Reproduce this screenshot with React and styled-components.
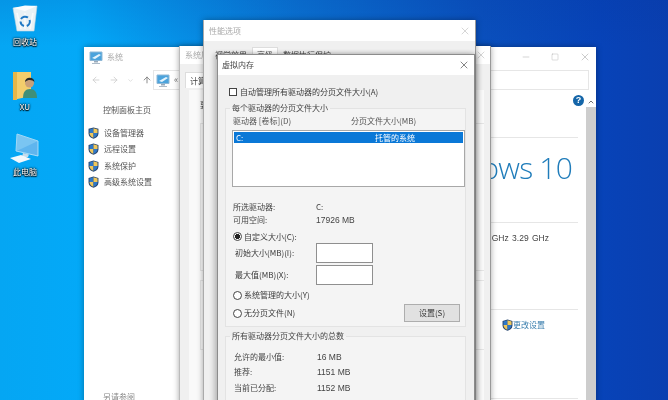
import React from 'react';
import styled, { createGlobalStyle } from 'styled-components';
import { ArrowLeft, ArrowRight, ArrowUp, ChevronDown, ChevronUp, Minus, Square, X } from 'lucide-react';

const GlobalStyle = createGlobalStyle`
  html, body {
    margin: 0;
    padding: 0;
    background: #0a6fd0;
  }
  * {
    box-sizing: border-box;
  }
`;

const Desktop = styled.div`
  position: relative;
  width: 668px;
  height: 400px;
  overflow: hidden;
  filter: blur(0.45px);
  font-family: "Noto Sans CJK SC", "Liberation Sans", sans-serif;
  font-size: 8px;
  line-height: 10px;
  color: #3a3a3a;
  background:
    linear-gradient(180deg, rgba(4, 50, 150, 0.14) 0, rgba(4, 50, 150, 0) 46px),
    linear-gradient(90deg, #05a6f3 0, #03a9f8 84px, #0a72d2 300px, #0a50bd 480px, #0743b8 600px, #0a3fb0 668px);
`;

const IconColumn = styled.div`
  position: absolute;
  left: 0;
  top: 5px;
  width: 50px;
  display: flex;
  flex-direction: column;
`;

const DesktopItem = styled.div`
  height: 65px;
  display: flex;
  flex-direction: column;
  align-items: center;
  color: #fff;
  text-shadow: 0 0 2px #000, 0 0 2px #000, 0 1px 1px #000;
  svg {
    display: block;
    flex: none;
  }
`;

const DesktopLabel = styled.span`
  font-size: 8px;
  line-height: 10px;
`;

const WindowBase = styled.div`
  position: absolute;
  display: flex;
  flex-direction: column;
  overflow: hidden;
  background: #fff;
  box-shadow: 0 0 6px rgba(0, 0, 0, 0.35);
`;

const SystemWindow = styled(WindowBase)`
  left: 84px;
  top: 47px;
  width: 512px;
  height: 358px;
`;

const SystemDialog = styled(WindowBase)`
  left: 179px;
  top: 46px;
  width: 312px;
  height: 360px;
  background: #f0f0f0;
  border-left: 1px solid #bbb;
  border-right: 1px solid #999;
`;

const PerformanceDialog = styled(WindowBase)`
  left: 203px;
  top: 20px;
  width: 273px;
  height: 386px;
  background: #f0f0f0;
  border-left: 1px solid #aaa;
  border-right: 1px solid #999;
`;

const MemoryDialog = styled(WindowBase)`
  left: 217px;
  top: 54px;
  width: 258px;
  height: 352px;
  background: #f0f0f0;
  border: 1px solid #8c8c8c;
  box-shadow: -3px 0 5px rgba(0, 0, 0, 0.22), 3px 0 5px rgba(0, 0, 0, 0.18);
`;

const TitleBar = styled.div`
  flex: none;
  height: ${(p) => p.$h}px;
  display: flex;
  align-items: center;
  padding: 0 ${(p) => p.$right || 5}px 0 ${(p) => p.$left || 5}px;
  background: #fff;
  color: ${(p) => p.$color || '#aaa'};
  font-size: 8px;
`;

const TitleText = styled.span`
  flex: 1;
  padding-left: ${(p) => p.$indent || 0}px;
`;

const Controls = styled.div`
  display: flex;
  align-items: center;
  gap: 20px;
  color: #999;
`;

const NavBar = styled.div`
  flex: none;
  height: 26px;
  display: flex;
  align-items: center;
  padding: 0 7px 0 5px;
  color: #ccc;
`;

const NavButtons = styled.div`
  width: 64px;
  padding-left: 2px;
  display: flex;
  align-items: center;
  gap: 8px;
`;

const UpButton = styled(ArrowUp)`
  color: #777;
`;

const AddressBox = styled.div`
  flex: 1;
  height: 20px;
  display: flex;
  align-items: center;
  gap: 4px;
  padding-left: 2px;
  border: 1px solid #e6e6e6;
  color: #777;
  font-size: 9px;
`;

const SystemBody = styled.div`
  flex: 1;
  min-height: 0;
  display: grid;
  grid-template-columns: 1fr 10px;
`;

const MainPane = styled.div`
  display: grid;
  grid-template-columns: 100px 1fr;
`;

const SideNav = styled.nav`
  display: flex;
  flex-direction: column;
  padding: 12px 0 3px 4px;
  height: 312px;
  color: #555;
`;

const SideHome = styled.div`
  padding-left: 15px;
  margin-bottom: 10px;
`;

const SideItem = styled.div`
  height: 16.3px;
  display: flex;
  align-items: center;
  gap: 5px;
`;

const SideFooter = styled.div`
  margin-top: auto;
  padding-left: 15px;
  color: #888;
`;

const Content = styled.div`
  display: flex;
  flex-direction: column;
  padding-right: 8px;
`;

const ContentBlock = styled.section`
  flex: none;
  height: ${(p) => p.$h}px;
  display: flex;
  flex-direction: column;
  align-items: flex-end;
  padding-top: ${(p) => p.$top || 0}px;
  padding-right: ${(p) => p.$right || 0}px;
  border-bottom: 1px solid #e6e6e6;
`;

const HelpBadge = styled.span`
  width: 11px;
  height: 11px;
  margin-right: -6px;
  border-radius: 50%;
  background: #1465a8;
  color: #fff;
  font: bold 9px/11px "Liberation Sans", sans-serif;
  text-align: center;
`;

const WindowsLogo = styled.div`
  font-family: "Open Sans", sans-serif;
  font-weight: 300;
  font-size: 30px;
  line-height: 34px;
  letter-spacing: -0.8px;
  color: #1f7cba;
  white-space: nowrap;
`;

const SpecLine = styled.div`
  font-family: "Liberation Sans", sans-serif;
  font-size: 8.5px;
  color: #444;
  white-space: nowrap;
  word-spacing: 1px;
`;

const ChangeLink = styled.div`
  display: flex;
  align-items: center;
  color: #3b7fae;
`;

const ScrollBar = styled.div`
  display: flex;
  flex-direction: column;
  padding-top: 4px;
  background: #fff;
`;

const ScrollArrow = styled.div`
  flex: none;
  height: 10px;
  display: flex;
  align-items: center;
  justify-content: center;
  color: #555;
`;

const ScrollThumb = styled.div`
  flex: 1;
  background: #cdcdcd;
`;

const TabRow = styled.div`
  flex: none;
  height: ${(p) => p.$h || 18}px;
  display: flex;
  padding-top: ${(p) => p.$top || 0}px;
  padding-left: ${(p) => p.$left || 0}px;
  color: #555;
`;

const Tab = styled.div`
  height: 16px;
  padding: ${(p) => p.$pad || 3}px 4px 0;
  background: ${(p) => (p.$active ? '#fff' : 'transparent')};
  border: 1px solid ${(p) => (p.$active ? '#ddd' : 'transparent')};
  border-bottom: 0;
  color: #444;
`;

const DialogPanel = styled.div`
  flex: 1;
  margin: 0 6px 0 9px;
  padding: 10px 0 0 11px;
  background: #f9f9f9;
  color: #444;
`;

const DialogGroup = styled.div`
  height: ${(p) => p.$h}px;
  margin-top: ${(p) => p.$mt || 0}px;
  border: 1px solid #e4e4e4;
  border-right: 0;
`;

const MemoryBody = styled.div`
  flex: 1;
  padding: 12px 8px 0 7px;
  display: flex;
  flex-direction: column;
`;

const CheckRow = styled.label`
  display: flex;
  align-items: center;
  gap: 3px;
  height: 10px;
  padding-left: 4px;
`;

const CheckBox = styled.span`
  width: 8px;
  height: 8px;
  border: 1px solid #444;
  background: #fff;
`;

const GroupBox = styled.fieldset`
  margin: ${(p) => p.$mt}px 0 0;
  padding: 0;
  height: ${(p) => p.$h}px;
  min-width: 0;
  border: 1px solid #e3e3e3;
  background: #f4f4f4;
`;

const GroupTitle = styled.legend`
  margin-left: 4px;
  padding: 0 2px;
  font-size: 8px;
  line-height: 10px;
  color: #444;
`;

const ColumnHead = styled.div`
  display: grid;
  grid-template-columns: 118px 1fr;
  height: 10px;
  margin-top: 3px;
  padding-left: 7px;
  color: #555;
`;

const DriveList = styled.div`
  height: 57px;
  margin: 4px 0 13px 6px;
  padding: 1px;
  background: #fff;
  border: 1px solid #a8a8a8;
`;

const DriveRow = styled.div`
  height: 11px;
  display: grid;
  grid-template-columns: 139px 1fr;
  padding-left: 2px;
  line-height: 11px;
  background: #0a78d7;
  color: #fff;
`;

const InfoRow = styled.div`
  display: grid;
  grid-template-columns: 83px 1fr;
  height: ${(p) => p.$h || 13}px;
  padding-left: ${(p) => p.$left || 7}px;
  align-items: center;
  color: #444;
`;

const NumberText = styled.span`
  font-family: "Liberation Sans", sans-serif;
  font-size: 8.5px;
`;

const RadioRow = styled.label`
  display: flex;
  align-items: center;
  gap: 2px;
  height: ${(p) => p.$h}px;
  margin-top: ${(p) => p.$mt || 0}px;
  padding-left: 7px;
`;

const Radio = styled.span`
  width: 9px;
  height: 9px;
  border: 1px solid #444;
  border-radius: 50%;
  background: ${(p) => (p.$on ? 'radial-gradient(circle, #222 0 2.4px, #fff 2.8px)' : '#fff')};
`;

const SizeRow = styled.div`
  display: grid;
  grid-template-columns: 81px 57px;
  align-items: center;
  height: 20px;
  margin-bottom: 2px;
  padding-left: 9px;
`;

const SizeInput = styled.div`
  height: 20px;
  background: #fff;
  border: 1px solid #8f8f8f;
`;

const ButtonRow = styled.div`
  display: flex;
  align-items: center;
  justify-content: space-between;
  height: 18px;
  padding-right: 5px;
  margin-top: 2px;
`;

const SetButton = styled.div`
  width: 56px;
  height: 18px;
  background: #e1e1e1;
  border: 1px solid #adadad;
  text-align: center;
  line-height: 16px;
`;

const Divider = styled.div`
  height: ${(p) => p.$gap}px;
`;

const SummaryRow = styled(InfoRow)`
  margin-bottom: 2.5px;
`;

const ShieldIcon = () => (
  <svg width="11" height="12" viewBox="0 0 12 13">
    <path d="M6 .4 11.4 2v5c0 3-2.6 5-5.4 5.7C3.200 12 .6 10 .6 7V2z" fill="#27466f" />
    <path d="M6 1.400 1.600 2.700v3.800H6z" fill="#2f78c8" />
    <path d="M6 1.400l4.400 1.300v3.800H6z" fill="#f0c75a" />
    <path d="M1.600 6.500H6v5.200C4 11.200 1.600 9.500 1.600 6.500z" fill="#f0c75a" />
    <path d="M10.400 6.500H6v5.200c2-.5 4.400-2.200 4.400-5.200z" fill="#2f78c8" />
  </svg>
);

const MonitorIcon = () => (
  <svg width="14" height="13" viewBox="0 0 14 13">
    <path d="M1 1h12v8.500H1z" fill="#4ba3dc" stroke="#8fb8d6" />
    <path d="M3 7l7-4 2 1-6 4z" fill="#e4f3fc" />
    <path d="M5 10h4v1.500H5z" fill="#9ab" />
    <path d="M3 12h8v.8H3z" fill="#9ab" />
  </svg>
);

const RecycleBin = () => (
  <svg width="26" height="32" viewBox="0 0 26 32">
    <path d="M1 3 25 1 22 26H5z" fill="#e8f1f5" stroke="#c6d8e0" strokeWidth=".6" />
    <path d="M1 3 13 6 25 1 13 .6z" fill="#fbfdfe" />
    <path d="M5 8 9 24M13 8v16M21 8l-3 16" stroke="#fff" strokeWidth="1.600" opacity=".7" />
    <path d="M9 14a5 5 0 0 1 7-1.500M17.600 15a5 5 0 0 1-2.800 6M12 21a5 5 0 0 1-3.500-4.500" fill="none" stroke="#1f78c4" strokeWidth="2" />
  </svg>
);

const UserFolder = () => (
  <svg width="26" height="32" viewBox="0 0 26 32">
    <path d="M1 2h18v24L1 30z" fill="#f3cd6c" />
    <path d="M1 2h4v28H1z" fill="#e6b648" />
    <path d="M11 28c0-6 2.500-9 7-9s7 3 7 9z" fill="#3f8f78" />
    <circle cx="17.500" cy="13" r="4.500" fill="#caa079" />
    <path d="M13 12c0-5 9-6 9.500 0-2-2-6-3-9.500 0z" fill="#23282c" />
  </svg>
);

const PcIconSvg = styled.svg`
  margin-top: -3px;
`;

const PcIcon = () => (
  <PcIconSvg width="32" height="35" viewBox="0 0 32 35">
    <path d="M8 2 29 9v15L7 19z" fill="#5fb5ee" stroke="#c4e6f8" strokeWidth=".8" />
    <path d="M8 2 29 9 12 17 7 19z" fill="#8cd0f5" opacity=".6" />
    <path d="M14 21 20 22.500 19 25H13z" fill="#c4dcec" />
    <path d="M1 26 12 23 22 27 10 31z" fill="#f2f8fc" />
  </PcIconSvg>
);

const CloseIcon = ({ color }) => <X size={12} strokeWidth={1.2} color={color} />;

const sideLinks = ['设备管理器', '远程设置', '系统保护', '高级系统设置'];

export default function App() {
  return (
    <Desktop>
      <GlobalStyle />
      <IconColumn>
        <DesktopItem>
          <RecycleBin />
          <DesktopLabel>回收站</DesktopLabel>
        </DesktopItem>
        <DesktopItem>
          <UserFolder />
          <DesktopLabel>XU</DesktopLabel>
        </DesktopItem>
        <DesktopItem>
          <PcIcon />
          <DesktopLabel>此电脑</DesktopLabel>
        </DesktopItem>
      </IconColumn>

      <SystemWindow>
        <TitleBar $h={20}>
          <MonitorIcon />
          <TitleText $indent={4}>系统</TitleText>
          <Controls>
            <Minus size={10} strokeWidth={1} />
            <Square size={8} strokeWidth={1} />
            <X size={12} strokeWidth={1} />
          </Controls>
        </TitleBar>
        <NavBar>
          <NavButtons>
            <ArrowLeft size={10} />
            <ArrowRight size={10} />
            <ChevronDown size={7} />
            <UpButton size={10} />
          </NavButtons>
          <AddressBox>
            <MonitorIcon />
            «
          </AddressBox>
        </NavBar>
        <SystemBody>
          <MainPane>
            <SideNav>
              <SideHome>控制面板主页</SideHome>
              {sideLinks.map((link) => (
                <SideItem key={link}>
                  <ShieldIcon />
                  {link}
                </SideItem>
              ))}
              <SideFooter>另请参阅</SideFooter>
            </SideNav>
            <Content>
              <ContentBlock $h={45} $top={2}>
                <HelpBadge>?</HelpBadge>
              </ContentBlock>
              <ContentBlock $h={85} $top={13} $right={6}>
                <WindowsLogo>Windows 10</WindowsLogo>
              </ContentBlock>
              <ContentBlock $h={87} $top={10} $right={29}>
                <SpecLine>3.19 GHz   3.29 GHz</SpecLine>
              </ContentBlock>
              <ContentBlock $h={89} $top={9} $right={33}>
                <ChangeLink>
                  <ShieldIcon />
                  更改设置
                </ChangeLink>
              </ContentBlock>
            </Content>
          </MainPane>
          <ScrollBar>
            <ScrollArrow>
              <ChevronUp size={8} strokeWidth={2.5} />
            </ScrollArrow>
            <ScrollThumb />
          </ScrollBar>
        </SystemBody>
      </SystemWindow>

      <SystemDialog>
        <TitleBar $h={18} $right={3}>
          <TitleText>系统属性</TitleText>
          <CloseIcon color="#bbb" />
        </TitleBar>
        <TabRow $h={26} $top={8} $left={5}>
          <Tab $active>计算机名</Tab>
        </TabRow>
        <DialogPanel>
          要进行
          <DialogGroup $h={148} $mt={13} />
          <DialogGroup $h={70} $mt={9} />
        </DialogPanel>
      </SystemDialog>

      <PerformanceDialog>
        <TitleBar $h={21} $left={5} $right={4}>
          <TitleText>性能选项</TitleText>
          <CloseIcon color="#bbb" />
        </TitleBar>
        <TabRow $top={6} $left={6}>
          <Tab $pad={2}>视觉效果</Tab>
          <Tab $active $pad={2}>高级</Tab>
          <Tab $pad={2}>数据执行保护</Tab>
        </TabRow>
      </PerformanceDialog>

      <MemoryDialog>
        <TitleBar $h={20} $left={4} $right={4} $color="#444">
          <TitleText>虚拟内存</TitleText>
          <CloseIcon color="#333" />
        </TitleBar>
        <MemoryBody>
          <CheckRow>
            <CheckBox />
            自动管理所有驱动器的分页文件大小(A)
          </CheckRow>
          <GroupBox $mt={6} $h={224}>
            <GroupTitle>每个驱动器的分页文件大小</GroupTitle>
            <ColumnHead>
              <span>驱动器 [卷标](D)</span>
              <span>分页文件大小(MB)</span>
            </ColumnHead>
            <DriveList>
              <DriveRow>
                <span>C:</span>
                <span>托管的系统</span>
              </DriveRow>
            </DriveList>
            <InfoRow>
              <span>所选驱动器:</span>
              <span>C:</span>
            </InfoRow>
            <InfoRow>
              <span>可用空间:</span>
              <NumberText>17926 MB</NumberText>
            </InfoRow>
            <RadioRow $h={13} $mt={4}>
              <Radio $on />
              自定义大小(C):
            </RadioRow>
            <SizeRow>
              <span>初始大小(MB)(I):</span>
              <SizeInput />
            </SizeRow>
            <SizeRow>
              <span>最大值(MB)(X):</span>
              <SizeInput />
            </SizeRow>
            <RadioRow $h={14} $mt={3}>
              <Radio />
              系统管理的大小(Y)
            </RadioRow>
            <ButtonRow>
              <RadioRow $h={14}>
                <Radio />
                无分页文件(N)
              </RadioRow>
              <SetButton>设置(S)</SetButton>
            </ButtonRow>
          </GroupBox>
          <GroupBox $mt={4} $h={70}>
            <GroupTitle>所有驱动器分页文件大小的总数</GroupTitle>
            <Divider $gap={9} />
            <SummaryRow $left={8}>
              <span>允许的最小值:</span>
              <NumberText>16 MB</NumberText>
            </SummaryRow>
            <SummaryRow $left={8}>
              <span>推荐:</span>
              <NumberText>1151 MB</NumberText>
            </SummaryRow>
            <SummaryRow $left={8}>
              <span>当前已分配:</span>
              <NumberText>1152 MB</NumberText>
            </SummaryRow>
          </GroupBox>
        </MemoryBody>
      </MemoryDialog>
    </Desktop>
  );
}
